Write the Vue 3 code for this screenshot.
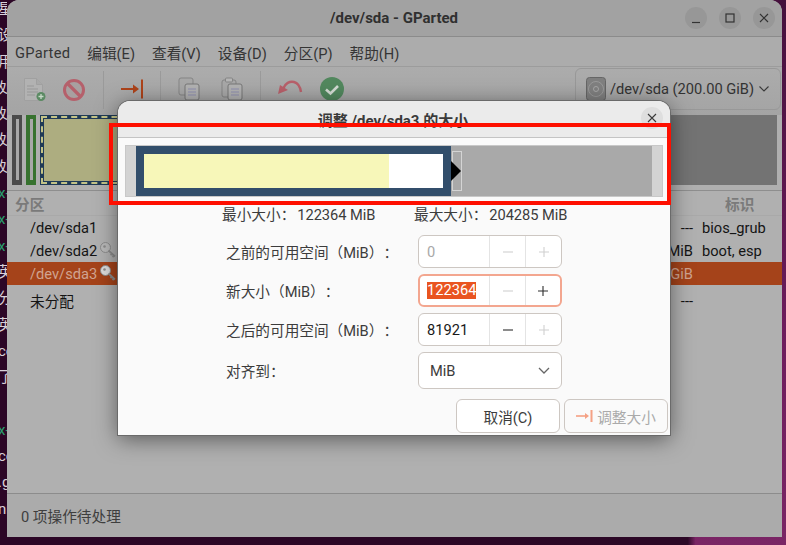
<script setup>
const menus = ['GParted', '编辑(E)', '查看(V)', '设备(D)', '分区(P)', '帮助(H)']
const termLines = ['星', '设', '用', '处', '处', '处', '处', 'x-', 'x-', 'x-', '英', '分', '英', 'ce', '了', '', 'x-', 'ce', '.g', 'nr', '']
const spins = [
  { label: '之前的可用空间（MiB）：', value: '0', off: true, minusOff: true, plusOff: true },
  { label: '新大小（MiB）：', value: '122364', focus: true, minusOff: true },
  { label: '之后的可用空间（MiB）：', value: '81921', plusOff: true }
]
const rows = [
  { name: '/dev/sda1', size: '---', flags: 'bios_grub' },
  { name: '/dev/sda2', key: true, size: 'MiB', flags: 'boot, esp' },
  { name: '/dev/sda3', key: true, size: 'GiB', flags: '', selected: true },
  { name: '未分配', size: '---', flags: '', tall: true }
]
</script>

<template>
  <div class="desktop">
    <div class="terminal">
      <div v-for="(t, i) in termLines" :key="i" class="term-line" :class="{ green: t === 'x-' }">{{ t }}</div>
    </div>

    <div class="window">
      <header class="titlebar">
        <span class="title">/dev/sda - GParted</span>
        <div class="wm">
          <span class="wm-btn"><svg width="12" height="12" viewBox="0 0 12 12"><path d="M2 10.5h8" stroke="#333" stroke-width="1.2"/></svg></span>
          <span class="wm-btn"><svg width="12" height="12" viewBox="0 0 12 12"><rect x="2" y="2" width="8" height="8" fill="none" stroke="#333" stroke-width="1.2"/></svg></span>
          <span class="wm-btn"><svg width="12" height="12" viewBox="0 0 12 12"><path d="M2 2l8 8M10 2l-8 8" stroke="#333" stroke-width="1.2"/></svg></span>
        </div>
      </header>

      <nav class="menubar">
        <span v-for="m in menus" :key="m">{{ m }}</span>
      </nav>

      <div class="toolbar">
        <svg class="t-new" width="24" height="24" viewBox="0 0 24 24">
          <path d="M1.5 0.5h12l6 6v16h-18z" fill="#b2b2b2" stroke="#a0a0a0"/>
          <path d="M13.5 0.5v6h6" fill="#a8a8a8" stroke="#a0a0a0"/>
          <path d="M4 8h7M4 11h11M4 14h11M4 17h8" stroke="#989898"/>
          <circle cx="18" cy="18.5" r="4.5" fill="#5b8a63"/>
          <path d="M15.5 18.5h5M18 16v5" stroke="#c8d8c8" stroke-width="1.3"/>
        </svg>
        <svg class="t-stop" width="24" height="24" viewBox="0 0 24 24">
          <circle cx="12" cy="12" r="9.5" fill="#a8a0a0" stroke="#b5606b" stroke-width="3"/>
          <path d="M5.5 5.5l13 13" stroke="#b5606b" stroke-width="3.2"/>
        </svg>
        <i class="sep sep1"></i>
        <svg class="t-resize" width="24" height="22" viewBox="0 0 24 22">
          <path d="M0 11h15" stroke="#ad431a" stroke-width="2"/>
          <path d="M12 6.5l6 4.5-6 4.5z" fill="#ad431a"/>
          <path d="M21 1.5v19" stroke="#ad431a" stroke-width="2"/>
        </svg>
        <i class="sep sep2"></i>
        <svg class="t-copy" width="22" height="24" viewBox="0 0 22 24">
          <rect x="1" y="1" width="14" height="17" rx="2" fill="#a8a8a8" stroke="#858585"/>
          <rect x="7" y="7" width="14" height="16" rx="2" fill="#b2b2b2" stroke="#777"/>
          <path d="M10 12h8M10 15h8M10 18h8" stroke="#8f8fb0"/>
        </svg>
        <svg class="t-paste" width="22" height="24" viewBox="0 0 22 24">
          <rect x="1" y="3" width="14" height="17" rx="2" fill="#a8a8a8" stroke="#858585"/>
          <rect x="4.5" y="1" width="7" height="4" rx="1" fill="#b6b6b6" stroke="#858585"/>
          <rect x="7" y="7" width="14" height="16" rx="2" fill="#b2b2b2" stroke="#777"/>
          <path d="M10 12h8M10 15h8M10 18h8" stroke="#8f8fb0"/>
        </svg>
        <i class="sep sep3"></i>
        <svg class="t-undo" width="26" height="20" viewBox="0 0 26 20">
          <path d="M6 10C8 4 13 2 17 3s6 4 7 10" fill="none" stroke="#b8606a" stroke-width="2.4"/>
          <path d="M1 15l2-9 8 5z" fill="#b8606a"/>
        </svg>
        <svg class="t-apply" width="26" height="26" viewBox="0 0 26 26">
          <circle cx="13" cy="13" r="12" fill="#52885e"/>
          <path d="M7 13.5l4.5 4L19 10" fill="none" stroke="#d4dcd4" stroke-width="2.6"/>
        </svg>
        <div class="device">
          <svg width="20" height="24" viewBox="0 0 20 24">
            <rect x="0.5" y="0.5" width="19" height="23" rx="3" fill="#808080" stroke="#666"/>
            <circle cx="10" cy="12" r="7.5" fill="none" stroke="#9a9a9a"/>
            <circle cx="10" cy="12" r="2.5" fill="none" stroke="#a8a8a8"/>
          </svg>
          <span>/dev/sda (200.00 GiB)</span>
          <svg width="12" height="8" viewBox="0 0 12 8"><path d="M1.5 1.5L6 6l4.5-4.5" fill="none" stroke="#3a3a3a" stroke-width="1.1"/></svg>
        </div>
      </div>

      <div class="diskmap">
        <div class="mini mini-grey"><i></i></div>
        <div class="mini mini-green"><i></i></div>
        <div class="mini-main"><div class="mini-dash"><div class="mini-fill"></div></div></div>
        <div class="mini-free"></div>
      </div>

      <section class="tree">
        <div class="tree-head">
          <span>分区</span>
          <span class="head-flags">标识</span>
        </div>
        <div v-for="r in rows" :key="r.name" class="tree-row" :class="{ selected: r.selected, tall: r.tall }">
          <span class="name">{{ r.name }}</span>
          <svg v-if="r.key" class="keyicon" width="17" height="16" viewBox="0 0 17 16">
            <circle cx="5.5" cy="5.5" r="5" class="key-head"/>
            <circle cx="4.5" cy="4.5" r="1.3" fill="#8a8a8a"/>
            <path d="M8.5 8.5l6.5 6M12 11.5l-1.5 1.5M14 13.5l-1.5 1.5" stroke="#8a8a8a" stroke-width="1.8"/>
          </svg>
          <span class="size">{{ r.size }}</span>
          <span class="flags">{{ r.flags }}</span>
        </div>
      </section>

      <footer class="status">0 项操作待处理</footer>
    </div>

    <div class="dialog">
      <header class="dlg-head">
        <span class="dlg-title">调整 /dev/sda3 的大小</span>
        <span class="dlg-close"><svg width="10" height="10" viewBox="0 0 10 10"><path d="M1 1l8 8M9 1L1 9" stroke="#3a3a3a" stroke-width="1.1"/></svg></span>
      </header>

      <div class="dlg-body">
        <div class="bar">
          <div class="bar-edge"></div>
          <div class="bar-part"><div class="bar-used"></div></div>
          <div class="bar-free"></div>
          <div class="bar-edge"></div>
          <div class="handle"></div>
          <div class="arrow"></div>
        </div>

        <div class="info">
          <span class="info-a">最小大小：<b>122364 MiB</b></span>
          <span>最大大小：<b>204285 MiB</b></span>
        </div>

        <div class="form">
          <template v-for="s in spins" :key="s.label">
            <label>{{ s.label }}</label>
            <div class="spin" :class="{ focus: s.focus }">
              <span class="spin-val" :class="{ off: s.off }"><em v-if="s.focus">{{ s.value }}</em><template v-else>{{ s.value }}</template></span>
              <span class="spin-btn" :class="{ off: s.minusOff }"><svg width="12" height="12" viewBox="0 0 12 12"><path d="M1 6h10" stroke="currentColor" stroke-width="1.1"/></svg></span>
              <span class="spin-btn" :class="{ off: s.plusOff }"><svg width="12" height="12" viewBox="0 0 12 12"><path d="M1 6h10M6 1v10" stroke="currentColor" stroke-width="1.1"/></svg></span>
            </div>
          </template>
          <label>对齐到：</label>
          <div class="combo">
            <span>MiB</span>
            <svg width="14" height="9" viewBox="0 0 14 9"><path d="M2 2l5 5 5-5" fill="none" stroke="#666" stroke-width="1.3"/></svg>
          </div>
        </div>

        <div class="actions">
          <button class="btn">取消(C)</button>
          <button class="btn btn-off">
            <svg width="17" height="12" viewBox="0 0 17 12">
              <path d="M0 6h10" stroke="#f5a184" stroke-width="1.6"/>
              <path d="M9 3l4 3-4 3z" fill="#f5a184"/>
              <path d="M15.5 0v12" stroke="#f5a184" stroke-width="2"/>
            </svg>
            调整大小
          </button>
        </div>
      </div>
    </div>

    <div class="annotation"></div>
  </div>
</template>

<style>
html, body { margin: 0; padding: 0; background: #2c0a26; }
</style>

<style scoped>
.desktop {
  position: relative;
  width: 786px;
  height: 545px;
  overflow: hidden;
  background:
    linear-gradient(90deg, #2c0626 0, #2c0826 87.5%, transparent 88.5%),
    linear-gradient(180deg, #45103c 0, #6d1c5c 60%, #7a2565 100%);
  font-family: Roboto, "Noto Sans CJK SC", sans-serif;
  font-size: 14.67px;
  color: #2e2e2e;
  text-spacing-trim: space-all;
}
.terminal {
  position: absolute;
  left: 0;
  top: -4px;
  width: 7px;
  overflow: hidden;
  color: #d8d0d8;
  line-height: 26.3px;
  font-size: 15px;
  white-space: nowrap;
}
.term-line { height: 26.3px; margin-left: -2px; }
.term-line.green { color: #2aa070; }

.window {
  position: absolute;
  left: 7px;
  top: 0;
  width: 775px;
  height: 537px;
  display: flex;
  flex-direction: column;
  background: #afafaf;
  border-radius: 12px 12px 0 0;
  overflow: hidden;
}
.titlebar {
  flex: none;
  height: 36px;
  border-bottom: 1px solid #8b8b8b;
  background: #a2a2a2;
  display: flex;
  align-items: center;
  position: relative;
  justify-content: center;
}
.title { font-weight: 700; font-size: 15px; color: #303030; margin-left: -1px; }
.wm { position: absolute; right: 7px; top: 7px; display: flex; gap: 12px; }
.wm-btn {
  width: 22px;
  height: 22px;
  border-radius: 50%;
  background: #979797;
  display: flex;
  align-items: center;
  justify-content: center;
}
.menubar {
  flex: none;
  height: 30px;
  box-sizing: border-box;
  padding: 2px 0 0 8px;
  display: flex;
  align-items: center;
  gap: 17px;
  border-bottom: 1px solid #9c9c9c;
  background: #acacac;
  color: #353535;
}
.menubar span:first-child { letter-spacing: 0.28px; }
.toolbar {
  flex: none;
  height: 48px;
  position: relative;
  background: linear-gradient(#acacac, #a4a4a4);
}
.toolbar > svg, .sep { position: absolute; }
.t-new { left: 16px; top: 11px; }
.t-stop { left: 55px; top: 11px; }
.sep { width: 1px; top: 4px; height: 38px; background: #9a9a9a; }
.sep1 { left: 96px; }
.sep2 { left: 153px; }
.sep3 { left: 253px; }
.t-resize { left: 114px; top: 11px; }
.t-copy { left: 171px; top: 10px; }
.t-paste { left: 214px; top: 10px; }
.t-undo { left: 270px; top: 12px; }
.t-apply { left: 312px; top: 9px; }
.device {
  position: absolute;
  left: 568px;
  top: 1px;
  width: 206px;
  height: 42px;
  box-sizing: border-box;
  border: 1px solid #989898;
  border-radius: 6px;
  display: flex;
  align-items: center;
  padding-left: 10px;
  gap: 4px;
  color: #333;
}
.device svg:last-child { margin-left: 0; }
.diskmap {
  flex: none;
  height: 70px;
  padding: 0 5px;
  display: flex;
}
.mini {
  width: 10px;
  box-sizing: border-box;
  padding: 4px 3px 5px 4px;
  margin-right: 4px;
}
.mini i { display: block; height: 100%; background: #a8a8a8; }
.mini-grey { background: #4b4b4b; }
.mini-green { background: #37722f; }
.mini-main {
  width: 300px;
  box-sizing: border-box;
  padding: 1px;
  background: #1f3a56;
}
.mini-dash {
  height: 100%;
  box-sizing: border-box;
  padding: 1px;
  border: 2px dashed #c3c387;
}
.mini-fill { height: 100%; background: #adad80; }
.mini-free { flex: 1; background: #737373; }
.tree {
  flex: 1;
  margin-top: 5px;
  border-top: 1px solid #8e8e8e;
  background: #b0b0b0;
}
.tree-head {
  height: 24px;
  display: flex;
  align-items: center;
  padding-left: 8px;
  font-weight: 700;
  color: #7a7a7a;
  border-bottom: 1px solid #a9a9a9;
  position: relative;
}
.head-flags {
  position: absolute;
  left: 718px;
}
.tree-row {
  height: 23px;
  display: flex;
  align-items: center;
  padding-left: 23px;
  color: #141414;
  position: relative;
}
.tree-row.tall { height: 31px; }
.tree-row.selected { background: #a5431a; color: #d0a491; }
.key-head { fill: #b8b8b8; stroke: #8a8a8a; }
.selected .key-head { fill: #dcdcdc; }
.keyicon { position: absolute; left: 93px; top: 3px; }
.size { position: absolute; right: 89px; }
.flags { position: absolute; left: 695px; }
.status {
  flex: none;
  height: 43px;
  border-top: 1px solid #8c8c8c;
  background: #ababab;
  display: flex;
  align-items: center;
  padding-left: 14px;
  color: #3e3e3e;
}

.dialog {
  position: absolute;
  left: 118px;
  top: 101px;
  width: 552px;
  height: 334px;
  display: flex;
  flex-direction: column;
  background: #fafafa;
  border-radius: 12px 12px 0 0;
  box-shadow: 0 0 0 1px #6a6a6a, 0 4px 22px rgba(0, 0, 0, 0.5);
}
.dlg-head {
  flex: none;
  height: 36px;
  display: flex;
  align-items: center;
  justify-content: center;
  position: relative;
  background: #ebebeb;
  border-bottom: 1px solid #c4c4c4;
  border-radius: 12px 12px 0 0;
}
.dlg-title { font-weight: 700; font-size: 15px; color: #3a3a3a; margin-left: -2px; }
.dlg-close {
  position: absolute;
  right: 7px;
  top: 6px;
  width: 22px;
  height: 22px;
  border-radius: 50%;
  background: #dedede;
  display: flex;
  align-items: center;
  justify-content: center;
}
.dlg-body { flex: 1; padding: 7px 2px 2px 7px; display: flex; flex-direction: column; }
.bar {
  position: relative;
  width: 538px;
  height: 52px;
  box-sizing: border-box;
  border: 1px solid #c8c8c8;
  display: flex;
  flex: none;
}
.bar-edge { width: 10px; background: #d3d3d3; }
.bar-part {
  width: 315px;
  box-sizing: border-box;
  border: 8px solid #324e6b;
  background: #fff;
}
.bar-used { width: 245px; height: 100%; background: #f7f7b9; }
.bar-free { flex: 1; background: #a9a9a9; }
.handle {
  position: absolute;
  left: 326px;
  top: 5px;
  width: 10px;
  height: 40px;
  box-sizing: border-box;
  border: 1px solid #d4d4d4;
}
.arrow {
  position: absolute;
  left: 325px;
  top: 15px;
  width: 0;
  height: 0;
  border-left: 10px solid #000;
  border-top: 10px solid transparent;
  border-bottom: 10px solid transparent;
}
.info {
  margin: 10px 0 0 97px;
  height: 17px;
  line-height: 17px;
  display: flex;
  color: #3c3c3c;
}
.info b { font-weight: 400; margin-left: 2px; letter-spacing: -0.05px; }
.info-a { width: 192px; }
.form {
  margin: 11px 0 0 101px;
  display: grid;
  grid-template-columns: 192px 144px;
  grid-template-rows: 33px 33px 33px 37px;
  row-gap: 6px;
  align-items: center;
}
.form label { color: #3c3c3c; }
.spin, .combo {
  box-sizing: border-box;
  height: 33px;
  border: 1px solid #cdc7c2;
  border-radius: 6px;
  background: #fff;
  display: flex;
  align-items: stretch;
}
.spin.focus { border: 2px solid #f3a68f; }
.spin-val {
  flex: 1;
  display: flex;
  align-items: center;
  padding-left: 8px;
  color: #1a1a1a;
}
.spin.focus .spin-val { padding-left: 7px; }
.spin-val.off { color: #a8a8a8; }
.spin-val em {
  font-style: normal;
  background: #e95420;
  color: #fff;
  line-height: 17px;
}
.spin-btn {
  width: 35px;
  border-left: 1px solid #e4e4e4;
  display: flex;
  align-items: center;
  justify-content: center;
  color: #2e2e2e;
}
.spin.focus .spin-btn:last-child { width: 34px; }
.spin-btn.off { color: #d0d0d0; }
.combo {
  height: 37px;
  align-items: center;
  justify-content: space-between;
  padding: 0 10px 0 11px;
  color: #3c3c3c;
}
.actions {
  margin-top: auto;
  display: flex;
  justify-content: flex-end;
  gap: 4px;
}
.btn {
  width: 104px;
  height: 34px;
  box-sizing: border-box;
  padding: 0;
  border: 1px solid #cdc7c2;
  border-radius: 6px;
  background: #fff;
  font: inherit;
  color: #3c3c3c;
  display: flex;
  align-items: center;
  justify-content: center;
  gap: 4px;
}
.btn-off { background: #fafafa; color: #aaa; }

.annotation {
  position: absolute;
  left: 109px;
  top: 123px;
  width: 562px;
  height: 82px;
  box-sizing: border-box;
  border: 4px solid #fe0f00;
}
</style>
